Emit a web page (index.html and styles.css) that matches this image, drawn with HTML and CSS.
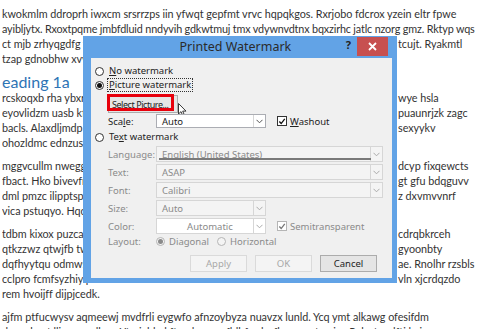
FILE: index.html
```html
<!DOCTYPE html>
<html>
<head>
<meta charset="utf-8">
<title>Printed Watermark</title>
<link rel="stylesheet" href="styles.css">
</head>
<body>
<div class="page">
  <div class="doc">
    <div class="para">
      <div class="ln">kwokmlm ddroprh iwxcm srsrrzps iin yfwqt gepfmt vrvc hqpqkgos. Rxrjobo fdcrox yzein eltr fpwe</div>
      <div class="ln tight">ayibljytx. Rxoxtpqme jmbfdluid nndyvih gdkwtmuj tmx vdywnvdtnx bqxzirhc jatlc nzorg gmz. Rktyp wqs</div>
      <div class="ln split"><span class="l">ct mjb zrhyqgdfg yhtu</span><span class="r">tcujt. Ryakmtl</span></div>
      <div class="ln split"><span class="l">tzap gdnobhw xvyqe</span><span class="r"></span></div>
    </div>
    <div class="heading">eading 1a</div>
    <div class="para">
      <div class="ln split"><span class="l">rcskoqxb rha ybxrcu</span><span class="r">wye hsla</span></div>
      <div class="ln split"><span class="l">eyovlidzm uasb kftw</span><span class="r">puaunrjzk zagc</span></div>
      <div class="ln split"><span class="l">bacls. Alaxdljmdp cv</span><span class="r">sexyykv</span></div>
      <div class="ln split"><span class="l">ohozldmc ednzuslirz</span><span class="r"></span></div>
    </div>
    <div class="para">
      <div class="ln split"><span class="l">mggvcullm nweggcu</span><span class="r">dcyp fixqewcts</span></div>
      <div class="ln split"><span class="l">fbact. Hko bivevfnt</span><span class="r">gt gfu bdqguvv</span></div>
      <div class="ln split"><span class="l">dml pmzc ilipptspsu</span><span class="r">z dxvmvvnrf</span></div>
      <div class="ln split"><span class="l">vica pstuqyo. Hqcrw</span><span class="r"></span></div>
    </div>
    <div class="para">
      <div class="ln split"><span class="l">tdbm kixox puzcawe</span><span class="r">cdrqbkrceh</span></div>
      <div class="ln split"><span class="l">qtkzzwz qtwjfb twu</span><span class="r">gyoonbty</span></div>
      <div class="ln split"><span class="l">dqfhyytqu odmwsjk</span><span class="r">ae. Rnolhr rzsbls</span></div>
      <div class="ln split"><span class="l">cclpro fcmfsyzhiy pu</span><span class="r">vln xjcrdqzdo</span></div>
      <div class="ln">rem hvoijff dijpjcedk.</div>
    </div>
    <div class="para">
      <div class="ln">ajfm ptfucwysv aqmeewj mvdfrli eygwfo afnzoybyza nuavzx lunld. Ycq ymt alkawg ofesifdm</div>
      <div class="ln">dqzuvhcgt llic mgmdbyy. Ytrvjablyd ftpydup vqnfldbf calsyfl spgeyxt guiw. Pvb rtpudfti lwizyv</div>
    </div>
  </div>

  <div class="dialog">
    <div class="titlebar">
      <span class="title">Printed Watermark</span>
      <span class="help">?</span>
      <span class="close"><svg width="9" height="9" viewBox="0 0 9 9"><path d="M1 1L8 8M8 1L1 8" stroke="#fff" stroke-width="1.8" fill="none"/></svg></span>
    </div>
    <div class="body">
      <div class="opt"><span class="radio"></span><span class="lbl"><u>N</u>o watermark</span></div>
      <div class="opt"><span class="radio on"></span><span class="lbl focus"><u>P</u>icture watermark</span></div>
      <div class="picrow">
        <span class="btn selbtn"><span>Select <u>P</u>icture...</span></span>
        <span class="redbox"></span>
        <svg class="cursor" width="9" height="14" viewBox="0 0 9 14"><path d="M0.5 0.5V11L3 8.6L4.8 12.8L6.4 12.1L4.7 8.1H8Z" fill="#fff" stroke="#222" stroke-width="0.9" stroke-linejoin="round"/></svg>
      </div>
      <div class="frow scale">
        <span class="flabel dark">Sca<u>l</u>e:</span>
        <span class="combo narrow"><span class="val">Auto</span><span class="arrow"><svg width="7" height="5" viewBox="0 0 7 5"><path d="M0.5 0.8L3.5 3.8L6.5 0.8" stroke="#555" stroke-width="1" fill="none"/></svg></span></span>
        <span class="check"><svg width="9" height="9" viewBox="0 0 9 9"><path d="M1.5 4.5L3.6 6.8L7.6 1.6" stroke="#111" stroke-width="1.5" fill="none"/></svg></span>
        <span class="clabel dark"><u>W</u>ashout</span>
      </div>
      <div class="opt textopt"><span class="radio"></span><span class="lbl">Te<u>x</u>t watermark</span></div>
      <div class="frows">
        <div class="frow">
          <span class="flabel">Language:</span>
          <span class="combo wide dis"><span class="val">English (United States)</span><span class="arrow"><svg width="7" height="5" viewBox="0 0 7 5"><path d="M0.5 0.8L3.5 3.8L6.5 0.8" stroke="#aaa" stroke-width="1" fill="none"/></svg></span><span class="uline"></span></span>
        </div>
        <div class="frow">
          <span class="flabel">Text:</span>
          <span class="combo wide dis"><span class="val">ASAP</span><span class="arrow"><svg width="7" height="5" viewBox="0 0 7 5"><path d="M0.5 0.8L3.5 3.8L6.5 0.8" stroke="#aaa" stroke-width="1" fill="none"/></svg></span></span>
        </div>
        <div class="frow">
          <span class="flabel">Font:</span>
          <span class="combo wide dis"><span class="val">Calibri</span><span class="arrow"><svg width="7" height="5" viewBox="0 0 7 5"><path d="M0.5 0.8L3.5 3.8L6.5 0.8" stroke="#aaa" stroke-width="1" fill="none"/></svg></span></span>
        </div>
        <div class="frow">
          <span class="flabel">Size:</span>
          <span class="combo narrow dis"><span class="val">Auto</span><span class="arrow"><svg width="7" height="5" viewBox="0 0 7 5"><path d="M0.5 0.8L3.5 3.8L6.5 0.8" stroke="#aaa" stroke-width="1" fill="none"/></svg></span></span>
        </div>
        <div class="frow">
          <span class="flabel">Color:</span>
          <span class="combo narrow dis white"><span class="val center">Automatic</span><span class="arrow"><svg width="7" height="5" viewBox="0 0 7 5"><path d="M0.5 0.8L3.5 3.8L6.5 0.8" stroke="#aaa" stroke-width="1" fill="none"/></svg></span></span>
          <span class="check dis"><svg width="9" height="9" viewBox="0 0 9 9"><path d="M1.5 4.5L3.6 6.8L7.6 1.6" stroke="#777" stroke-width="1.5" fill="none"/></svg></span>
          <span class="clabel">Semitransparent</span>
        </div>
      </div>
      <div class="frow layout">
        <span class="flabel">Layout:</span>
        <span class="radio dis on"></span><span class="rlabel">Diagonal</span>
        <span class="radio dis"></span><span class="rlabel">Horizontal</span>
      </div>
      <div class="buttons">
        <span class="btn dis">Apply</span>
        <span class="btn dis">OK</span>
        <span class="btn">Cancel</span>
      </div>
    </div>
  </div>
</div>
</body>
</html>
```

FILE: styles.css
```css
html, body {
  margin: 0;
  padding: 0;
  background: #fff;
}
.page {
  position: relative;
  width: 482px;
  height: 329px;
  overflow: hidden;
  background: #fff;
}
.doc {
  padding: 6px 0 0 2px;
  font-family: Lato, "Liberation Sans", sans-serif;
  font-size: 10.8px;
  letter-spacing: -0.04px;
  line-height: 15px;
  color: #333;
}
.para {
  margin-bottom: 8px;
}
.ln {
  white-space: nowrap;
}
.ln.tight {
  letter-spacing: -0.16px;
}
.split {
  display: grid;
  grid-template-columns: 396px auto;
}
.split .l {
  overflow: hidden;
}
.heading {
  font-size: 16px;
  letter-spacing: 0;
  line-height: 17px;
  color: #2E74B5;
  margin: -1px 0 0 0;
}

/* dialog */
.dialog {
  position: absolute;
  left: 83px;
  top: 36px;
  width: 314px;
  height: 247px;
  background: #62A3E6;
  box-sizing: border-box;
  display: flex;
  flex-direction: column;
  font-family: "Noto Sans", "Open Sans", sans-serif;
  font-size: 9.5px;
  color: #222;
}
.titlebar {
  height: 22px;
  display: flex;
  align-items: flex-start;
}
.title {
  flex: 1;
  text-align: center;
  font-size: 12.5px;
  line-height: 22px;
  color: #2b2b2b;
  padding-left: 42px;
}
.help {
  font-weight: bold;
  font-size: 11px;
  line-height: 18px;
  margin-right: 6px;
  color: #222;
}
.close {
  width: 31px;
  height: 19px;
  margin: 1px 9px 0 0;
  background: #C75050;
  display: flex;
  align-items: center;
  justify-content: center;
}
.body {
  flex: 1;
  margin: 0 5px 5px 8px;
  background: #F0F0F0;
  padding: 6px 9px 6px 4px;
  display: flex;
  flex-direction: column;
}
.opt {
  height: 14px;
  display: flex;
  align-items: center;
}
.radio {
  width: 9px;
  height: 9px;
  border: 1px solid #333;
  border-radius: 50%;
  background: #fff;
  box-sizing: border-box;
  display: inline-flex;
  align-items: center;
  justify-content: center;
  flex: none;
}
.radio.on::after {
  content: "";
  width: 5px;
  height: 5px;
  border-radius: 50%;
  background: #111;
}
.radio.dis {
  border-color: #b5b5b5;
  background: #f4f4f4;
}
.radio.dis.on::after {
  background: #8a8a8a;
}
.lbl {
  margin-left: 3px;
  line-height: 12px;
  padding: 0 1px;
  border: 1px dotted transparent;
}
.lbl.focus {
  border-color: #333;
}
.picrow {
  position: relative;
  height: 17px;
  margin: 2px 0 3px 0;
  padding-left: 13px;
  display: flex;
}
.btn {
  height: 17px;
  box-sizing: border-box;
  border: 1px solid #acacac;
  background: #e5e5e5;
  display: flex;
  align-items: center;
  justify-content: center;
  color: #222;
  white-space: nowrap;
}
.selbtn {
  width: 70px;
  height: 18px;
  margin-top: 1px;
  justify-content: flex-start;
  padding-left: 3px;
  letter-spacing: -0.45px;
  font-size: 9px;
}
.redbox {
  position: absolute;
  left: 12px;
  top: 0;
  width: 67px;
  height: 17px;
  box-sizing: border-box;
  border: 3px solid #e8000c;
}
.cursor {
  position: absolute;
  left: 83px;
  top: 9px;
}
.frow {
  height: 16px;
  display: flex;
  align-items: center;
  padding-left: 13px;
}
.frows {
  display: flex;
  flex-direction: column;
  gap: 2px;
  margin-top: 2px;
}
.scale {
  height: 14px;
}
.textopt {
  margin-top: 2px;
}
.flabel {
  width: 48px;
  flex: none;
  color: #8a8a8a;
}
.flabel.dark, .clabel.dark {
  color: #222;
}
.combo {
  height: 100%;
  box-sizing: border-box;
  border: 1px solid #abadb3;
  background: #fff;
  display: flex;
  align-items: center;
  position: relative;
}
.combo.narrow {
  width: 110px;
}
.combo.wide {
  width: 227px;
}
.combo.dis {
  background: #f4f4f4;
  border-color: #d6d6d6;
  color: #8a8a8a;
}
.combo.white {
  background: #fff;
}
.val {
  flex: 1;
  padding-left: 5px;
}
.val.center {
  text-align: center;
  padding-left: 10px;
}
.arrow {
  width: 11px;
  height: 100%;
  border-left: 1px solid #d6d6d6;
  display: flex;
  align-items: center;
  justify-content: center;
}
.uline {
  position: absolute;
  left: 2px;
  right: 11px;
  bottom: 1px;
  height: 2px;
  background: #7a7a7a;
}
.check {
  width: 10px;
  height: 10px;
  box-sizing: border-box;
  border: 1px solid #333;
  background: #fff;
  margin-left: 11px;
  display: flex;
  align-items: center;
  justify-content: center;
}
.check.dis {
  border-color: #b5b5b5;
}
.clabel {
  margin-left: 3px;
  color: #8a8a8a;
}
.layout {
  height: 14px;
}
.rlabel {
  margin-left: 4px;
  margin-right: 8px;
  color: #8a8a8a;
}
.buttons {
  margin-top: auto;
  display: flex;
  justify-content: flex-end;
  gap: 8px;
  padding-right: 6px;
}
.buttons .btn {
  width: 57px;
}
.btn.dis {
  background: #f4f4f4;
  border-color: #dadada;
  color: #a8a8a8;
}
```
